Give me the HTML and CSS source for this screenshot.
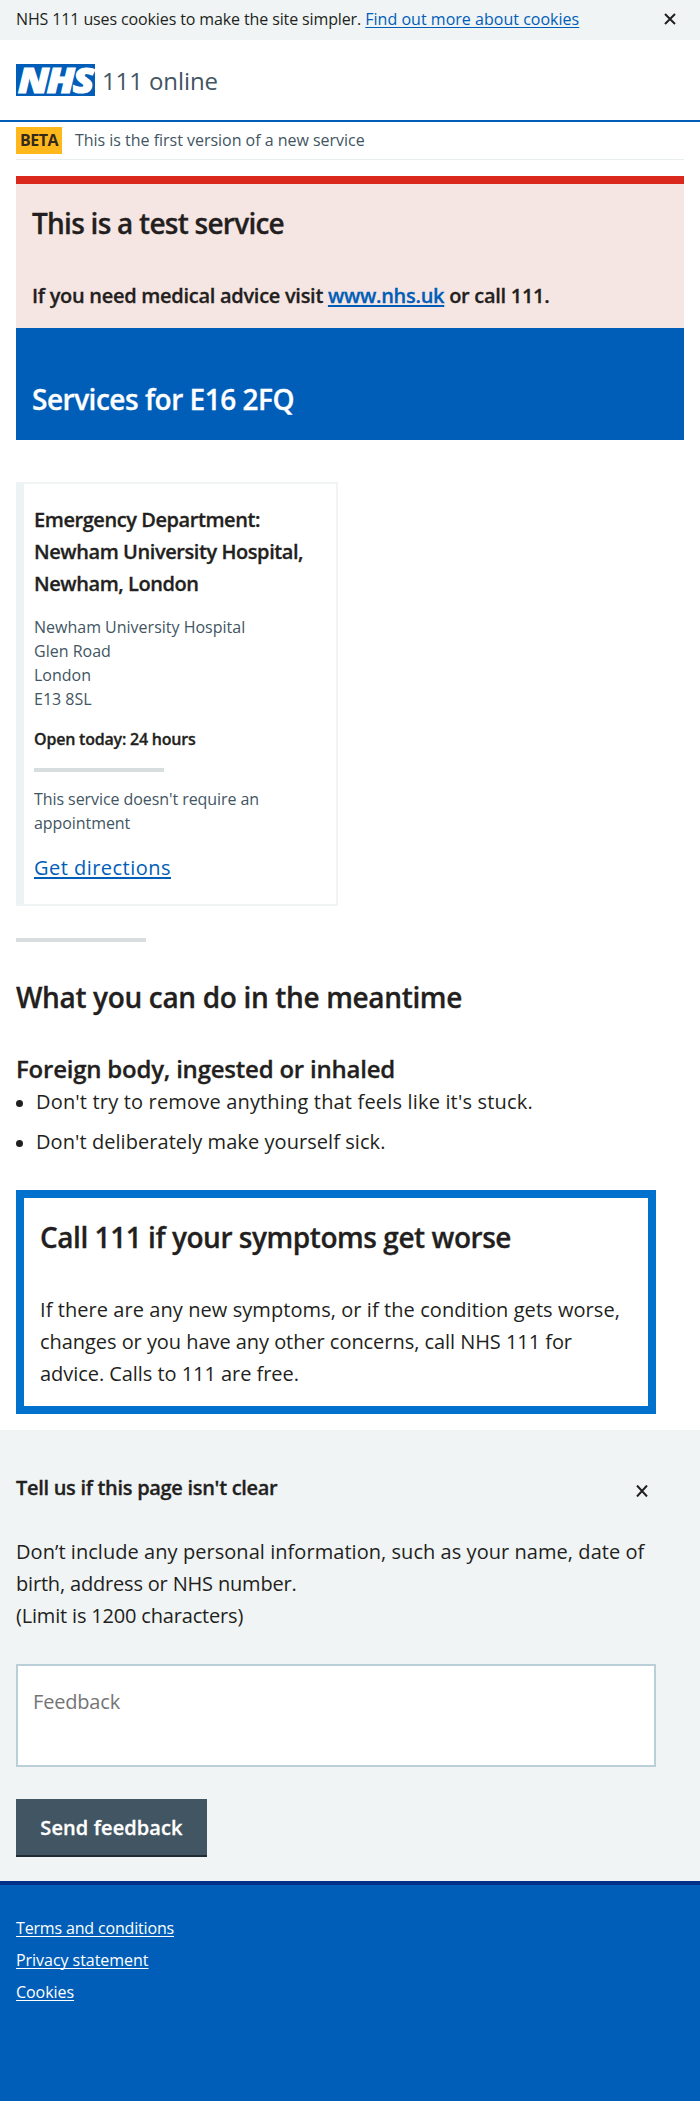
FILE: index.html
```html
<!DOCTYPE html>
<html lang="en">
<head>
<meta charset="utf-8">
<title>NHS 111 online</title>
<link rel="stylesheet" href="styles.css">
</head>
<body>
<div class="cookie-bar">
  <p class="cookie-text"><span class="cookie-message">NHS 111 uses cookies to make the site simpler.</span> <a href="#">Find out more about cookies</a></p>
  <button class="icon-button" type="button" aria-label="Close"><svg width="12" height="12" viewBox="0 0 12 12"><path d="M1 1l10 10M11 1L1 11" fill="none" stroke="#231f20" stroke-width="2"/></svg></button>
</div>
<header class="site-header">
  <svg class="logo" width="79" height="32" viewBox="0 0 79 32" role="img" aria-label="NHS">
    <rect width="79" height="32" fill="#005eb8"/>
    <text class="logo-text" x="2" y="28.5" textLength="74" lengthAdjust="spacingAndGlyphs">NHS</text>
  </svg>
  <span class="service-name">111 online</span>
</header>
<div class="phase">
  <div class="phase-banner"><strong class="phase-tag">BETA</strong><span>This is the first version of a new service</span></div>
</div>
<main>
  <section class="test-banner">
    <h2 class="heading test-title">This is a test service</h2>
    <p class="test-text">If you need medical advice visit <a href="#">www.nhs.uk</a> or call 111.</p>
  </section>
  <section class="services-banner"><h1 class="heading services-title">Services for E16 2FQ</h1></section>
  <article class="card">
    <h3 class="card-title">Emergency Department:<br>Newham University Hospital,<br>Newham, London</h3>
    <p class="small address">Newham University Hospital<br>Glen Road<br>London<br>E13 8SL</p>
    <p class="opening">Open today: 24 hours</p>
    <hr class="rule card-rule">
    <p class="small note">This service doesn't require an appointment</p>
    <p class="directions"><a href="#">Get directions</a></p>
  </article>
  <hr class="rule section-rule">
  <section class="advice">
    <h2 class="heading advice-title">What you can do in the meantime</h2>
    <h3 class="advice-subtitle">Foreign body, ingested or inhaled</h3>
    <ul class="advice-list">
      <li>Don't try to remove anything that feels like it's stuck.</li>
      <li class="snug">Don't deliberately make yourself sick.</li>
    </ul>
  </section>
  <section class="callout">
    <h2 class="heading callout-title">Call 111 if your symptoms get worse</h2>
    <p class="callout-text">If there are any new symptoms, or if the condition gets worse,<br><span class="snug">changes or you have any other concerns, call NHS 111 for<br>advice. Calls to 111 are free.</span></p>
  </section>
</main>
<section class="feedback">
  <div class="feedback-head">
    <h2 class="feedback-title">Tell us if this page isn't clear</h2>
    <button class="icon-button" type="button" aria-label="Close"><svg width="12" height="12" viewBox="0 0 12 12"><path d="M1 .5l10 11M11 .5L1 11.500" fill="none" stroke="#231f20" stroke-width="2"/></svg></button>
  </div>
  <p class="feedback-text">Don’t include any personal information, such as your name, date of<br><span class="tight">birth, address or NHS number.<br>(Limit is 1200 characters)</span></p>
  <textarea class="feedback-input" placeholder="Feedback"></textarea>
  <button class="send" type="button">Send feedback</button>
</section>
<footer class="site-footer">
  <a href="#">Terms and conditions</a>
  <a class="wide" href="#">Privacy statement</a>
  <a class="wide" href="#">Cookies</a>
</footer>
</body>
</html>
```
FILE: styles.css
```css
* { box-sizing: border-box; }
body { margin: 0; background: #fff; color: #231f20; font: 20px/32px "Open Sans", "Noto Sans", sans-serif; }
h1, h2, h3, p, ul { margin: 0; padding: 0; }
h1, h2, h3, .test-text, .opening, .send { -webkit-text-stroke: .3px currentColor; }
a { color: #005eb8; text-underline-offset: 2px; text-decoration-thickness: 2px; text-decoration-skip-ink: none; }

.icon-button { display: flex; padding: 0; border: 0; background: none; }

.cookie-bar { display: flex; justify-content: space-between; align-items: flex-start; height: 40px; padding: 7px 24px 0 16px; background: #f0f4f5; }
.cookie-bar .icon-button { margin-top: 6px; }
.cookie-text { font-size: 16px; line-height: 24px; }
.cookie-text a { text-decoration-thickness: 1px; letter-spacing: .021px; }
.cookie-message { letter-spacing: -.12px; }

.site-header { display: flex; align-items: center; height: 80px; padding: 0 16px; }
.logo { display: block; overflow: visible; }
.logo-text { fill: #fff; stroke: #fff; stroke-width: 1.2px; font: italic 800 35px "Open Sans", sans-serif; letter-spacing: -2px; }
.service-name { margin: 2px 0 0 7px; color: #425563; font-size: 24px; letter-spacing: -.1px; }

.phase { padding: 5px 16px 0; border-top: 2px solid #005eb8; }
.phase-banner { display: flex; gap: 13px; padding-bottom: 5px; border-bottom: 1px solid #e8edee; color: #425563; font-size: 16px; line-height: 26px; letter-spacing: -.02px; }
.phase-tag { width: 46px; height: 27px; background: #ffb81c; color: #332a1d; font-weight: 700; text-align: center; letter-spacing: -.5px; }

main { padding: 16px 16px 0; }
.heading { font-size: 28px; line-height: 40px; font-weight: 600; }
.test-banner { height: 152px; padding: 19px 16px 0; border-top: 8px solid #da291c; background: #f6e6e3; }
.test-title { letter-spacing: -.745px; }
.test-text { margin-top: 37px; font-weight: 600; letter-spacing: -.285px; }
.services-banner { height: 112px; padding: 51px 16px 0; background: #005eb8; color: #fff; }
.services-title { letter-spacing: -.49px; }

.card { width: 322px; margin-top: 42px; padding: 20px 16px 20px 10px; border: 2px solid #f0f4f5; border-left: 8px solid #edf2f5; }
.card-title { font-size: 20px; font-weight: 600; letter-spacing: -.43px; }
.small { color: #425563; font-size: 16px; line-height: 24px; }
.address { margin-top: 15px; }
.opening { margin-top: 16px; font-size: 16px; line-height: 24px; font-weight: 600; letter-spacing: -.21px; }
.rule { width: 130px; height: 4px; margin: 0; border: 0; background: #d8dde0; }
.card-rule { margin-top: 17px; }
.note { margin-top: 15px; letter-spacing: -.07px; }
.directions { margin-top: 17px; letter-spacing: .473px; }

.section-rule { margin-top: 32px; }
.advice-title { margin-top: 35px; letter-spacing: -.346px; }
.advice-subtitle { margin-top: 36px; font-size: 24px; line-height: 32px; font-weight: 600; letter-spacing: -.221px; }
.advice-list { display: flex; flex-direction: column; gap: 8px; margin-top: 1px; list-style: none; letter-spacing: .17px; }
.advice-list li { display: flex; align-items: center; gap: 13px; }
.advice-list li::before { content: ""; width: 7px; height: 7px; margin-top: 2px; border-radius: 50%; background: #231f20; }
.advice-list .snug { letter-spacing: .06px; }

.callout { width: 640px; margin-top: 32px; padding: 19px 16px 16px; border: 8px solid #0072ce; }
.callout-title { letter-spacing: -.455px; }
.callout-text { margin-top: 37px; letter-spacing: .069px; white-space: nowrap; }
.callout .snug { letter-spacing: -.05px; }

.feedback { margin-top: 16px; padding: 42px 44px 24px 16px; background: #f0f4f5; }
.feedback-head { display: flex; justify-content: space-between; padding-right: 8px; }
.feedback-head .icon-button { margin-top: 13px; }
.feedback-title { font-size: 20px; line-height: 32px; font-weight: 600; letter-spacing: -.3px; }
.feedback-text { margin-top: 32px; letter-spacing: .05px; white-space: nowrap; }
.tight { letter-spacing: -.18px; }
.feedback-input { display: block; width: 640px; height: 103px; margin-top: 32px; padding: 20px 15px; border: 2px solid #bacfd8; border-radius: 0; background: #fff; font: inherit; letter-spacing: -.184px; resize: none; }
.feedback-input::placeholder { color: #757575; }
.send { display: block; width: 191px; height: 58px; margin-top: 32px; padding: 1px 0 0; border: 0; border-bottom: 2px solid #212b32; background: #425563; color: #fff; font: 600 20px/32px "Open Sans", "Noto Sans", sans-serif; letter-spacing: .1px; }

.site-footer { display: flex; flex-direction: column; align-items: flex-start; height: 220px; padding: 27px 16px 0; border-top: 4px solid #003087; background: #005eb8; }
.site-footer a { color: #fff; font-size: 16px; letter-spacing: -.166px; text-decoration-thickness: 1px; }
.site-footer .wide { letter-spacing: -.04px; }
```
